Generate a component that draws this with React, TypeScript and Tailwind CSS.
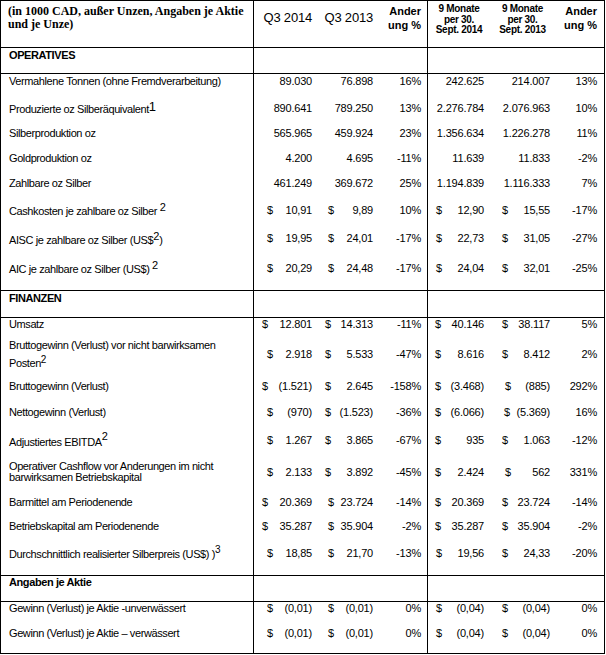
import React from "react";

type C = { v: string; pl?: string };

const COLS = "grid grid-cols-[253px_62px_61px_51px_62px_65px_49px]";
const PR = ["pr-[4px]", "pr-[4px]", "pr-[6px]", "pr-[6px]", "pr-[5px]", "pr-[7px]"];

const A = "pl-[13px]";
const A2 = "pl-[8px]";
const B = "pl-[9px]";
const B2 = "pl-[12px]";
const D = "pl-[7px]";
const D2 = "pl-[8px]";
const E = "pl-[12px]";
const E2 = "pl-[14px]";
const E3 = "pl-[15px]";

const p = (v: string): C => ({ v });
const d = (v: string, pl: string): C => ({ v, pl });

function Sup({ children, cls }: { children: React.ReactNode; cls?: string }) {
  return (
    <span className={"leading-none tracking-normal " + (cls ?? "text-[11px] align-[4px]")}>
      {children}
    </span>
  );
}

function Row({
  label,
  cells,
  h,
  pad,
}: {
  label: React.ReactNode;
  cells: C[];
  h: string;
  pad: string;
}) {
  return (
    <div className={COLS + " " + h}>
      <div
        className={
          "flex items-center border-r border-black pl-[8px] tracking-[-0.4px] whitespace-nowrap " + pad
        }
      >
        <div>{label}</div>
      </div>
      {cells.map((c, i) => {
        const base =
          "flex items-center tracking-[-0.2px] whitespace-nowrap " +
          PR[i] +
          " " +
          pad +
          (i === 2 ? " border-r border-black" : "");
        if (c.pl)
          return (
            <div key={i} className={base + " justify-between " + c.pl}>
              <span>$</span>
              <span>{c.v}</span>
            </div>
          );
        return (
          <div key={i} className={base + " justify-end"}>
            {c.v}
          </div>
        );
      })}
    </div>
  );
}

function SectionHead({ title, h, pt }: { title: string; h: string; pt: string }) {
  return (
    <div className={COLS + " " + h + " border-b border-black"}>
      <div className={"border-r border-black pl-[8px] font-bold tracking-[-0.4px] " + pt}>{title}</div>
      <div />
      <div />
      <div className="border-r border-black" />
      <div />
      <div />
      <div />
    </div>
  );
}

export default function App() {
  return (
    <div className="bg-white min-h-[655px]">
      <div className="w-[605px] border border-black bg-white text-black font-['Liberation_Sans',Arial,sans-serif] text-[11px] leading-[13px]">
        {/* Header */}
        <div className={COLS + " h-[47px] border-b border-black"}>
          <div className="border-r border-black pl-[7px] pt-[4px] font-['Liberation_Serif','Times_New_Roman',serif] font-bold text-[12px] leading-[13px] whitespace-nowrap">
            <div>(in 1000 CAD, außer Unzen, Angaben je Aktie</div>
            <div>und je Unze)</div>
          </div>
          <div className="pt-[9px] pr-[4px] text-right text-[13px] leading-[15px] tracking-[-0.2px] whitespace-nowrap">
            Q3 2014
          </div>
          <div className="pt-[9px] pr-[4px] text-right text-[13px] leading-[15px] tracking-[-0.2px] whitespace-nowrap">
            Q3 2013
          </div>
          <div className="border-r border-black pt-[3px] pr-[6px] text-right font-bold text-[11px] leading-[14px] whitespace-nowrap">
            Ander
            <br />
            ung %
          </div>
          <div className="pt-[3px] text-center font-bold text-[10px] leading-[10.5px] tracking-[-0.3px] whitespace-nowrap">
            9 Monate
            <br />
            per 30.
            <br />
            Sept. 2014
          </div>
          <div className="pt-[3px] text-center font-bold text-[10px] leading-[10.5px] tracking-[-0.3px] whitespace-nowrap">
            9 Monate
            <br />
            per 30.
            <br />
            Sept. 2013
          </div>
          <div className="pt-[3px] pr-[7px] text-right font-bold text-[11px] leading-[14px] whitespace-nowrap">
            Ander
            <br />
            ung %
          </div>
        </div>

        {/* OPERATIVES */}
        <SectionHead title="OPERATIVES" h="h-[26px]" pt="pt-[1px]" />
        <div className="h-[217px] border-b border-black">
          <Row
            h="h-[20px]"
            pad="pb-[6px]"
            label="Vermahlene Tonnen (ohne Fremdverarbeitung)"
            cells={[p("89.030"), p("76.898"), p("16%"), p("242.625"), p("214.007"), p("13%")]}
          />
          <Row
            h="h-[26px]"
            pad="pt-[2px]"
            label={
              <>
                Produzierte oz Silberäquivalent
                <Sup cls="text-[13px] align-[2px]">1</Sup>
              </>
            }
            cells={[p("890.641"), p("789.250"), p("13%"), p("2.276.784"), p("2.076.963"), p("10%")]}
          />
          <Row
            h="h-[26px]"
            pad=""
            label="Silberproduktion oz"
            cells={[p("565.965"), p("459.924"), p("23%"), p("1.356.634"), p("1.226.278"), p("11%")]}
          />
          <Row
            h="h-[25px]"
            pad=""
            label="Goldproduktion oz"
            cells={[p("4.200"), p("4.695"), p("-11%"), p("11.639"), p("11.833"), p("-2%")]}
          />
          <Row
            h="h-[25px]"
            pad=""
            label="Zahlbare oz Silber"
            cells={[p("461.249"), p("369.672"), p("25%"), p("1.194.839"), p("1.116.333"), p("7%")]}
          />
          <Row
            h="h-[28px]"
            pad=""
            label={
              <>
                Cashkosten je zahlbare oz Silber <Sup>2</Sup>
              </>
            }
            cells={[d("10,91", A), d("9,89", B2), p("10%"), d("12,90", D2), d("15,55", E), p("-17%")]}
          />
          <Row
            h="h-[29px]"
            pad=""
            label={
              <>
                AISC je zahlbare oz Silber (US$<Sup>2</Sup>)
              </>
            }
            cells={[d("19,95", A), d("24,01", B2), p("-17%"), d("22,73", D2), d("31,05", E), p("-27%")]}
          />
          <Row
            h="h-[37px]"
            pad="pb-[7px]"
            label={
              <>
                AIC je zahlbare oz Silber (US$) <Sup>2</Sup>
              </>
            }
            cells={[d("20,29", A), d("24,48", B2), p("-17%"), d("24,04", D2), d("32,01", E), p("-25%")]}
          />
        </div>

        {/* FINANZEN */}
        <SectionHead title="FINANZEN" h="h-[27px]" pt="pt-[1px]" />
        <div className="h-[258px] border-b border-black">
          <Row
            h="h-[20px]"
            pad="pb-[10px]"
            label="Umsatz"
            cells={[d("12.801", A2), d("14.313", B), p("-11%"), d("40.146", D), d("38.117", E), p("5%")]}
          />
          <Row
            h="h-[32px]"
            pad=""
            label={
              <>
                <div className="leading-[12px]">Bruttogewinn (Verlust) vor nicht barwirksamen</div>
                <div className="leading-[12px] mt-[4px]">
                  Posten<Sup cls="text-[10px] align-[4px]">2</Sup>
                </div>
              </>
            }
            cells={[d("2.918", A), d("5.533", B), p("-47%"), d("8.616", D), d("8.412", E), p("2%")]}
          />
          <Row
            h="h-[29px]"
            pad="pt-[3px]"
            label="Bruttogewinn (Verlust)"
            cells={[d("(1.521)", A2), d("2.645", B), p("-158%"), d("(3.468)", D), d("(885)", E3), p("292%")]}
          />
          <Row
            h="h-[26px]"
            pad=""
            label="Nettogewinn (Verlust)"
            cells={[d("(970)", A), d("(1.523)", B), p("-36%"), d("(6.066)", D), d("(5.369)", E2), p("16%")]}
          />
          <Row
            h="h-[30px]"
            pad=""
            label={
              <>
                Adjustiertes EBITDA<Sup cls="text-[11px] align-[6px]">2</Sup>
              </>
            }
            cells={[d("1.267", A), d("3.865", B), p("-67%"), d("935", D), d("1.063", E), p("-12%")]}
          />
          <Row
            h="h-[32px]"
            pad="pt-[2px]"
            label={
              <>
                <div className="leading-[11px]">Operativer Cashflow vor Anderungen im nicht</div>
                <div className="leading-[11px]">barwirksamen Betriebskapital</div>
              </>
            }
            cells={[d("2.133", A), d("3.892", B), p("-45%"), d("2.424", D), d("562", E3), p("331%")]}
          />
          <Row
            h="h-[27px]"
            pad="pt-[3px]"
            label="Barmittel am Periodenende"
            cells={[d("20.369", A2), d("23.724", B2), p("-14%"), d("20.369", D), d("23.724", E), p("-14%")]}
          />
          <Row
            h="h-[25px]"
            pad=""
            label="Betriebskapital am Periodenende"
            cells={[d("35.287", A2), d("35.904", B2), p("-2%"), d("35.287", D), d("35.904", E), p("-2%")]}
          />
          <Row
            h="h-[36px]"
            pad="pb-[8px]"
            label={
              <>
                Durchschnittlich realisierter Silberpreis (US$) )<Sup cls="text-[10px] align-[5px]">3</Sup>
              </>
            }
            cells={[d("18,85", A), d("21,70", B2), p("-13%"), d("19,56", D2), d("24,33", E), p("-20%")]}
          />
        </div>

        {/* Angaben je Aktie */}
        <SectionHead title="Angaben je Aktie" h="h-[26px]" pt="pt-0" />
        <div className="h-[51px]">
          <Row
            h="h-[18px]"
            pad="pb-[6px]"
            label="Gewinn (Verlust) je Aktie -unverwässert"
            cells={[d("(0,01)", A), d("(0,01)", B2), p("0%"), d("(0,04)", D2), d("(0,04)", E), p("0%")]}
          />
          <Row
            h="h-[33px]"
            pad="pb-[7px]"
            label="Gewinn (Verlust) je Aktie – verwässert"
            cells={[d("(0,01)", A), d("(0,01)", B2), p("0%"), d("(0,04)", D2), d("(0,04)", E), p("0%")]}
          />
        </div>
      </div>
    </div>
  );
}
